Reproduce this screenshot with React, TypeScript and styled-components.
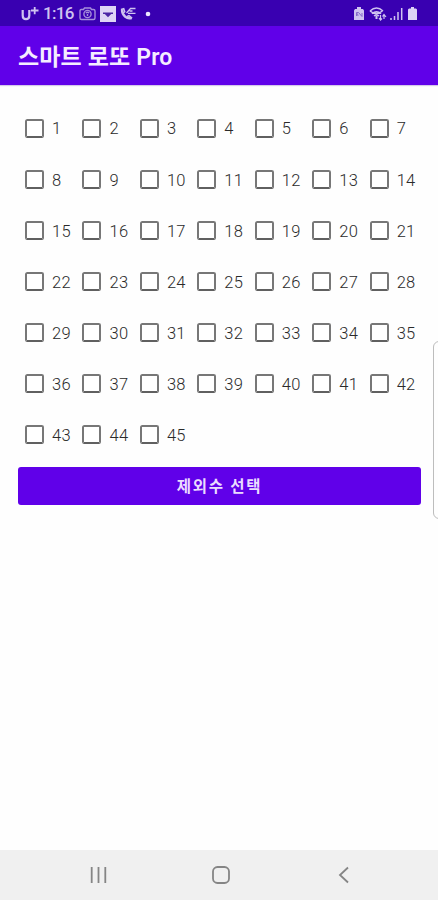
import React, { useState } from 'react';
import styled, { createGlobalStyle } from 'styled-components';

const GlobalStyle = createGlobalStyle`
  * { box-sizing: border-box; }
  body { margin: 0; background: #fff; font-family: Roboto, "Noto Sans CJK KR", sans-serif; }
`;

const Screen = styled.div`
  position: relative;
  display: flex;
  flex-direction: column;
  width: 438px;
  height: 900px;
  overflow: hidden;
  background: #fefefe;
`;

const StatusBar = styled.header`
  display: flex;
  justify-content: space-between;
  align-items: center;
  height: 26px;
  padding: 1px 21px 0 21px;
  background: #3900b1;
  color: #cfc3f0;
`;

const StatusGroup = styled.div`
  display: flex;
  align-items: center;
  height: 25px;
`;

const Clock = styled.span`
  width: 32px;
  margin-left: 4px;
  font-size: 17px;
  font-weight: 500;
  line-height: 25px;
  letter-spacing: -0.7px;
  white-space: nowrap;
`;

const Glyph = styled.svg<{ $gap?: number }>`
  display: block;
  flex: none;
  margin-left: ${(p) => p.$gap ?? 0}px;
`;

const AppBar = styled.div`
  display: flex;
  align-items: center;
  height: 59px;
  padding: 4px 18px 0;
  background: #6000e9;
  box-shadow: 0 1px 1px #d5c8ea;
`;

const Title = styled.h1`
  margin: 0;
  color: #f5edff;
  font-size: 23px;
  font-weight: 600;
  line-height: 32px;
  letter-spacing: 0.15px;
  white-space: nowrap;
`;

const Content = styled.main`
  flex: 1;
  padding: 17.5px 17px 0 18px;
`;

const NumberGrid = styled.div`
  display: grid;
  grid-template-columns: repeat(7, 57.45px);
  grid-auto-rows: 51.1px;
`;

const NumberOption = styled.label`
  display: flex;
  align-items: center;
  padding-left: 7px;
  color: #2a2a2a;
  font-size: 16.5px;
  font-weight: 300;
  line-height: 20px;
  letter-spacing: 0.3px;
`;

const HiddenInput = styled.input`
  appearance: none;
  width: 0;
  height: 0;
  margin: 0;
`;

const Box = styled.span<{ $checked: boolean }>`
  width: 19px;
  height: 19px;
  margin-right: 8px;
  border: 2px solid ${(p) => (p.$checked ? '#6000e9' : '#777')};
  border-bottom-color: ${(p) => (p.$checked ? '#6000e9' : '#606060')};
  border-radius: 2.5px;
  background: ${(p) => (p.$checked ? '#6000e9' : '#fff')};
`;

const Label = styled.span`
  padding-top: 2.8px;
`;

const ExcludeButton = styled.button`
  display: block;
  width: 403px;
  height: 38px;
  margin-top: 6.8px;
  padding: 2px 0 0;
  border: 0;
  border-radius: 3px;
  background: #6000e9;
  color: #eadcff;
  font: 600 15.5px/36px Roboto, "Noto Sans CJK KR", sans-serif;
  letter-spacing: 1.7px;
`;

const EdgeHandle = styled.div`
  position: absolute;
  right: -8px;
  top: 341px;
  width: 13px;
  height: 178px;
  border: 1px solid #bdbdbd;
  border-radius: 6px;
  background: #fefefe;
`;

const NavBar = styled.nav`
  display: flex;
  justify-content: space-between;
  height: 50px;
  padding: 15px 84px 0 88px;
  background: #f0f0f0;
`;

const NavIcon = styled.svg`
  display: block;
  width: 20px;
  height: 20px;
  fill: none;
  stroke: #858585;
  stroke-width: 1.8;
`;

const numbers = Array.from({ length: 45 }, (_, i) => i + 1);

export default function App() {
  const [selected, setSelected] = useState<number[]>([]);
  const toggle = (n: number) =>
    setSelected((s) => (s.includes(n) ? s.filter((v) => v !== n) : [...s, n]));

  return (
    <>
      <GlobalStyle />
      <Screen>
        <StatusBar>
          <StatusGroup>
            <Glyph width="18" height="16" fill="none" stroke="currentColor">
              <path d="M1.7 4v5.500q0 3.600 3.300 3.600t3.300-3.600V4" strokeWidth="2.200" />
              <path d="M10 4.500h7.500M13.700 1v7.200" strokeWidth="1.800" />
            </Glyph>
            <Clock>1:16</Clock>
            <Glyph $gap={4} width="17" height="14" fill="none" stroke="#a68edb" strokeWidth="1.4">
              <path d="M4.500 2.500H2.200Q1 2.500 1 4v7q0 1.500 1.500 1.500h12Q16 12.500 16 11V4q0-1.500-1.500-1.500h-2L11.500 1h-6z" />
              <circle cx="8.500" cy="7" r="3.600" />
              <path d="M6.800 6q1.700-1.500 3.400 0M8.500 7v2" />
            </Glyph>
            <Glyph $gap={4} width="16" height="16">
              <rect width="16" height="16" fill="#ded4f5" />
              <path d="M3 6.500h10v1.400h-1.800L8 11.200 4.800 7.900H3z" fill="#4b24a5" />
            </Glyph>
            <Glyph $gap={4} width="17" height="15" fill="none" stroke="currentColor">
              <path d="M2 3.500Q2 8 5 10.500t6 1.500" strokeWidth="2.400" />
              <path d="M1 3.500l2.700-.7 1 3-1.500 1.200M7 10.500l2-.8 2.500 2-.8 1.500" strokeWidth="1.600" />
              <path d="M6.500 7l4-4.500h5M8 7.300h7.500M9.500 5h3" strokeWidth="1.300" />
            </Glyph>
            <Glyph $gap={8} width="6" height="6">
              <circle cx="3" cy="3" r="2.300" fill="#eee8ff" />
            </Glyph>
          </StatusGroup>
          <StatusGroup>
            <Glyph width="12" height="15">
              <path d="M4 1h4v2h2l1 1.500V14H1V4.500L2 3h2z" fill="currentColor" />
              <path d="M3.500 10V6.500h2l3.500 4V7M5 10l-.5-2.500" fill="none" stroke="#8569c9" />
            </Glyph>
            <Glyph $gap={4} width="18" height="16" fill="none" stroke="currentColor" strokeWidth="1.500">
              <path d="M1 5q6.500-6 13 0M3 7.700q4.500-4 9 0M5 10q2.500-2 5 0M1 5q6 5 12.500 0" />
              <path d="M7.500 10v3" strokeWidth="2" />
              <path d="M11.500 9v5m-1.500-2l1.500 2 1.500-1.500M15 13V8.500m-1.500 2l1.500-2 2 2.500" strokeWidth="1.200" />
            </Glyph>
            <Glyph $gap={3} width="13" height="14" fill="none" stroke="currentColor" strokeWidth="1.500">
              <path d="M1 11v2M4.500 9v4M8 5v8" />
              <path d="M11.700 1v12" />
            </Glyph>
            <Glyph $gap={5} width="9" height="15">
              <path d="M3 1h3v1.500h2l1 1V14H0V3.500l1-1h2z" fill="#dcd3f6" />
            </Glyph>
          </StatusGroup>
        </StatusBar>
        <AppBar>
          <Title>스마트 로또 Pro</Title>
        </AppBar>
        <Content>
          <NumberGrid>
            {numbers.map((n) => (
              <NumberOption key={n}>
                <HiddenInput
                  type="checkbox"
                  checked={selected.includes(n)}
                  onChange={() => toggle(n)}
                />
                <Box $checked={selected.includes(n)} />
                <Label>{n}</Label>
              </NumberOption>
            ))}
          </NumberGrid>
          <ExcludeButton type="button">제외수 선택</ExcludeButton>
        </Content>
        <EdgeHandle />
        <NavBar>
          <NavIcon>
            <path d="M3.700 2v16M10.500 2v16M17.300 2v16" />
          </NavIcon>
          <NavIcon>
            <rect x="2" y="2" width="16" height="16" rx="4.500" />
          </NavIcon>
          <NavIcon>
            <path d="M14 2.500L6 10l8 7.500" />
          </NavIcon>
        </NavBar>
      </Screen>
    </>
  );
}
